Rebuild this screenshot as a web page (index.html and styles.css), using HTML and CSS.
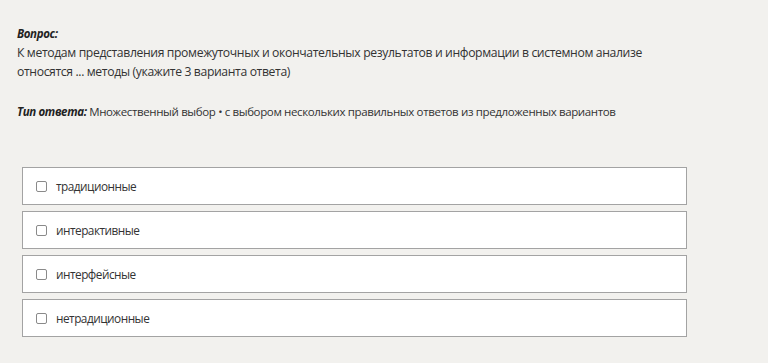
FILE: index.html
```html
<!DOCTYPE html>
<html lang="ru">
<head>
<meta charset="utf-8">
<link rel="stylesheet" href="styles.css">
</head>
<body>
<div class="page">
  <div class="question">
    <div class="label">Вопрос:</div>
    <div class="text">К методам представления промежуточных и окончательных результатов и информации в системном анализе относятся ... методы (укажите 3 варианта ответа)</div>
  </div>
  <div class="type"><span class="label">Тип ответа:</span> Множественный выбор • с выбором нескольких правильных ответов из предложенных вариантов</div>
  <div class="options">
    <label class="option"><span class="box"></span><span>традиционные</span></label>
    <label class="option"><span class="box"></span><span>интерактивные</span></label>
    <label class="option"><span class="box"></span><span>интерфейсные</span></label>
    <label class="option"><span class="box"></span><span>нетрадиционные</span></label>
  </div>
</div>
</body>
</html>
```
FILE: styles.css
```css
html, body {
  margin: 0;
  padding: 0;
  background: #f2f1ee;
}
body {
  font-family: "Open Sans", "Noto Sans", sans-serif;
  font-size: 11.5px;
  letter-spacing: -0.37px;
  color: #333;
}
.page {
  padding: 24px 0 0 17px;
}
.question {
  width: 660px;
  line-height: 19px;
}
.question .text {
  font-size: 12.2px;
}
.label {
  font-weight: 700;
  font-style: italic;
  color: #222;
}
.type {
  margin-top: 21px;
  line-height: 19px;
}
.options {
  margin-top: 46px;
  margin-left: 5px;
  width: 665px;
  display: flex;
  flex-direction: column;
  gap: 6px;
}
.option {
  box-sizing: border-box;
  height: 38px;
  background: #fff;
  border: 1px solid #a3a3a3;
  display: flex;
  align-items: center;
  padding-left: 13px;
  gap: 9px;
  font-size: 11.8px;
  letter-spacing: -0.5px;
}
.box {
  width: 9px;
  height: 9px;
  border: 1px solid #8a8a8a;
  border-radius: 2px;
  background: #fff;
}
```
